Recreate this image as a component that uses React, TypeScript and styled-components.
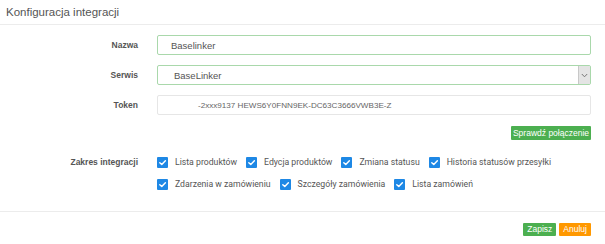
import styled, { createGlobalStyle } from "styled-components";

const GlobalStyle = createGlobalStyle`
  html, body {
    margin: 0;
    padding: 0;
    background: #ffffff;
  }
  body {
    font-family: "Liberation Sans", Arial, sans-serif;
  }
`;

const scopes = [
  "Lista produktów",
  "Edycja produktów",
  "Zmiana statusu",
  "Historia statusów przesyłki",
  "Zdarzenia w zamówieniu",
  "Szczegóły zamówienia",
  "Lista zamówień",
];

const CheckIcon = () => (
  <svg width="9" height="9" viewBox="0 0 10 10">
    <path
      d="M2 5.2 L4.2 7.3 L8.2 3"
      fill="none"
      stroke="#ffffff"
      strokeWidth="1.6"
      strokeLinecap="round"
      strokeLinejoin="round"
    />
  </svg>
);

const App = () => {
  return (
    <Modal>
      <GlobalStyle />
      <Header>
        <Title>Konfiguracja integracji</Title>
      </Header>
      <Body>
        <Row>
          <Label>Nazwa</Label>
          <Input $active>Baselinker</Input>
        </Row>
        <Row>
          <Label>Serwis</Label>
          <Select>
            <SelectValue>BaseLinker</SelectValue>
            <SelectArrow>
              <svg width="7" height="5" viewBox="0 0 7 5">
                <path
                  d="M0.8 1 L3.5 3.8 L6.2 1"
                  fill="none"
                  stroke="#777"
                  strokeWidth="1"
                />
              </svg>
            </SelectArrow>
          </Select>
        </Row>
        <Row>
          <Label>Token</Label>
          <Input $token>-2xxx9137 HEWS6Y0FNN9EK-DC63C3666VWB3E-Z</Input>
        </Row>
        <ActionRow>
          <SmallButton $color="#4caf50">Sprawdź połączenie</SmallButton>
        </ActionRow>
        <ScopeRow>
          <ScopeLabel>Zakres integracji</ScopeLabel>
          <ScopeList>
            {scopes.map((s) => (
              <ScopeItem key={s}>
                <Box>
                  <CheckIcon />
                </Box>
                <ScopeText>{s}</ScopeText>
              </ScopeItem>
            ))}
          </ScopeList>
        </ScopeRow>
      </Body>
      <Footer>
        <FooterButton $color="#4caf50">Zapisz</FooterButton>
        <FooterButton $color="#ff9800">Anuluj</FooterButton>
      </Footer>
    </Modal>
  );
};

const Modal = styled.div`
  width: 605px;
  min-height: 244px;
  background: #ffffff;
  display: flex;
  flex-direction: column;
`;

const Header = styled.div`
  flex-shrink: 0;
  height: 24px;
  border-bottom: 1px solid #ececec;
  padding-left: 6px;
  display: flex;
  align-items: center;
`;

const Title = styled.h4`
  margin: 0;
  font-size: 11.5px;
  font-weight: 400;
  color: #555555;
`;

const Body = styled.div`
  flex-shrink: 0;
  padding: 10px 14px 16px 0;
  display: flex;
  flex-direction: column;
  gap: 10px;
  border-bottom: 1px solid #ececec;
`;

const Row = styled.div`
  display: grid;
  grid-template-columns: 138px 1fr;
  column-gap: 19px;
  align-items: center;
  height: 20px;
`;

const Label = styled.label`
  text-align: right;
  font-size: 8.5px;
  font-weight: 700;
  color: #555555;
`;

const Input = styled.div<{ $active?: boolean; $token?: boolean }>`
  box-sizing: border-box;
  height: 20px;
  display: flex;
  align-items: center;
  padding-left: ${(p) => (p.$token ? "40px" : "13px")};
  border: 1px solid ${(p) => (p.$active ? "#a9d8ab" : "#e6e6e6")};
  border-radius: 2px;
  font-size: ${(p) => (p.$token ? "8.1px" : "9.5px")};
  color: ${(p) => (p.$token ? "#666666" : "#555555")};
  white-space: nowrap;
`;

const Select = styled.div`
  box-sizing: border-box;
  height: 20px;
  display: flex;
  align-items: center;
  border: 1px solid #a9d8ab;
  border-radius: 2px;
`;

const SelectValue = styled.span`
  flex: 1;
  padding-left: 16px;
  font-size: 9.5px;
  color: #555555;
`;

const SelectArrow = styled.span`
  width: 11px;
  height: 18px;
  background: #e4e4e4;
  border-left: 1px solid #c8c8c8;
  display: flex;
  align-items: center;
  justify-content: center;
`;

const ActionRow = styled.div`
  display: flex;
  justify-content: flex-end;
  margin-top: 1px;
`;

const SmallButton = styled.button<{ $color: string }>`
  height: 14px;
  width: 80px;
  padding: 0;
  border: none;
  border-radius: 1px;
  background: ${(p) => p.$color};
  color: #ffffff;
  font-family: "Liberation Sans", Arial, sans-serif;
  font-size: 8.5px;
  line-height: 14px;
`;

const ScopeRow = styled.div`
  display: grid;
  grid-template-columns: 138px 1fr;
  column-gap: 19px;
  margin-top: 1px;
`;

const ScopeLabel = styled.div`
  text-align: right;
  font-size: 8.5px;
  font-weight: 700;
  color: #555555;
  line-height: 22px;
`;

const ScopeList = styled.div`
  display: flex;
  flex-wrap: wrap;
  column-gap: 9px;
`;

const ScopeItem = styled.div`
  height: 22px;
  display: flex;
  align-items: center;
  gap: 7px;
`;

const Box = styled.span`
  width: 11px;
  height: 11px;
  border-radius: 1px;
  background: #1e88e5;
  display: flex;
  align-items: center;
  justify-content: center;
`;

const ScopeText = styled.span`
  font-family: Roboto, "Liberation Sans", sans-serif;
  font-size: 8.7px;
  color: #555555;
`;

const Footer = styled.div`
  flex-shrink: 0;
  padding: 11px 14px 0 0;
  display: flex;
  justify-content: flex-end;
  gap: 3px;
`;

const FooterButton = styled.button<{ $color: string }>`
  height: 13px;
  padding: 0 4px;
  border: none;
  border-radius: 1px;
  background: ${(p) => p.$color};
  color: #ffffff;
  font-family: "Liberation Sans", Arial, sans-serif;
  font-size: 8.5px;
  line-height: 13px;
`;

export default App;
